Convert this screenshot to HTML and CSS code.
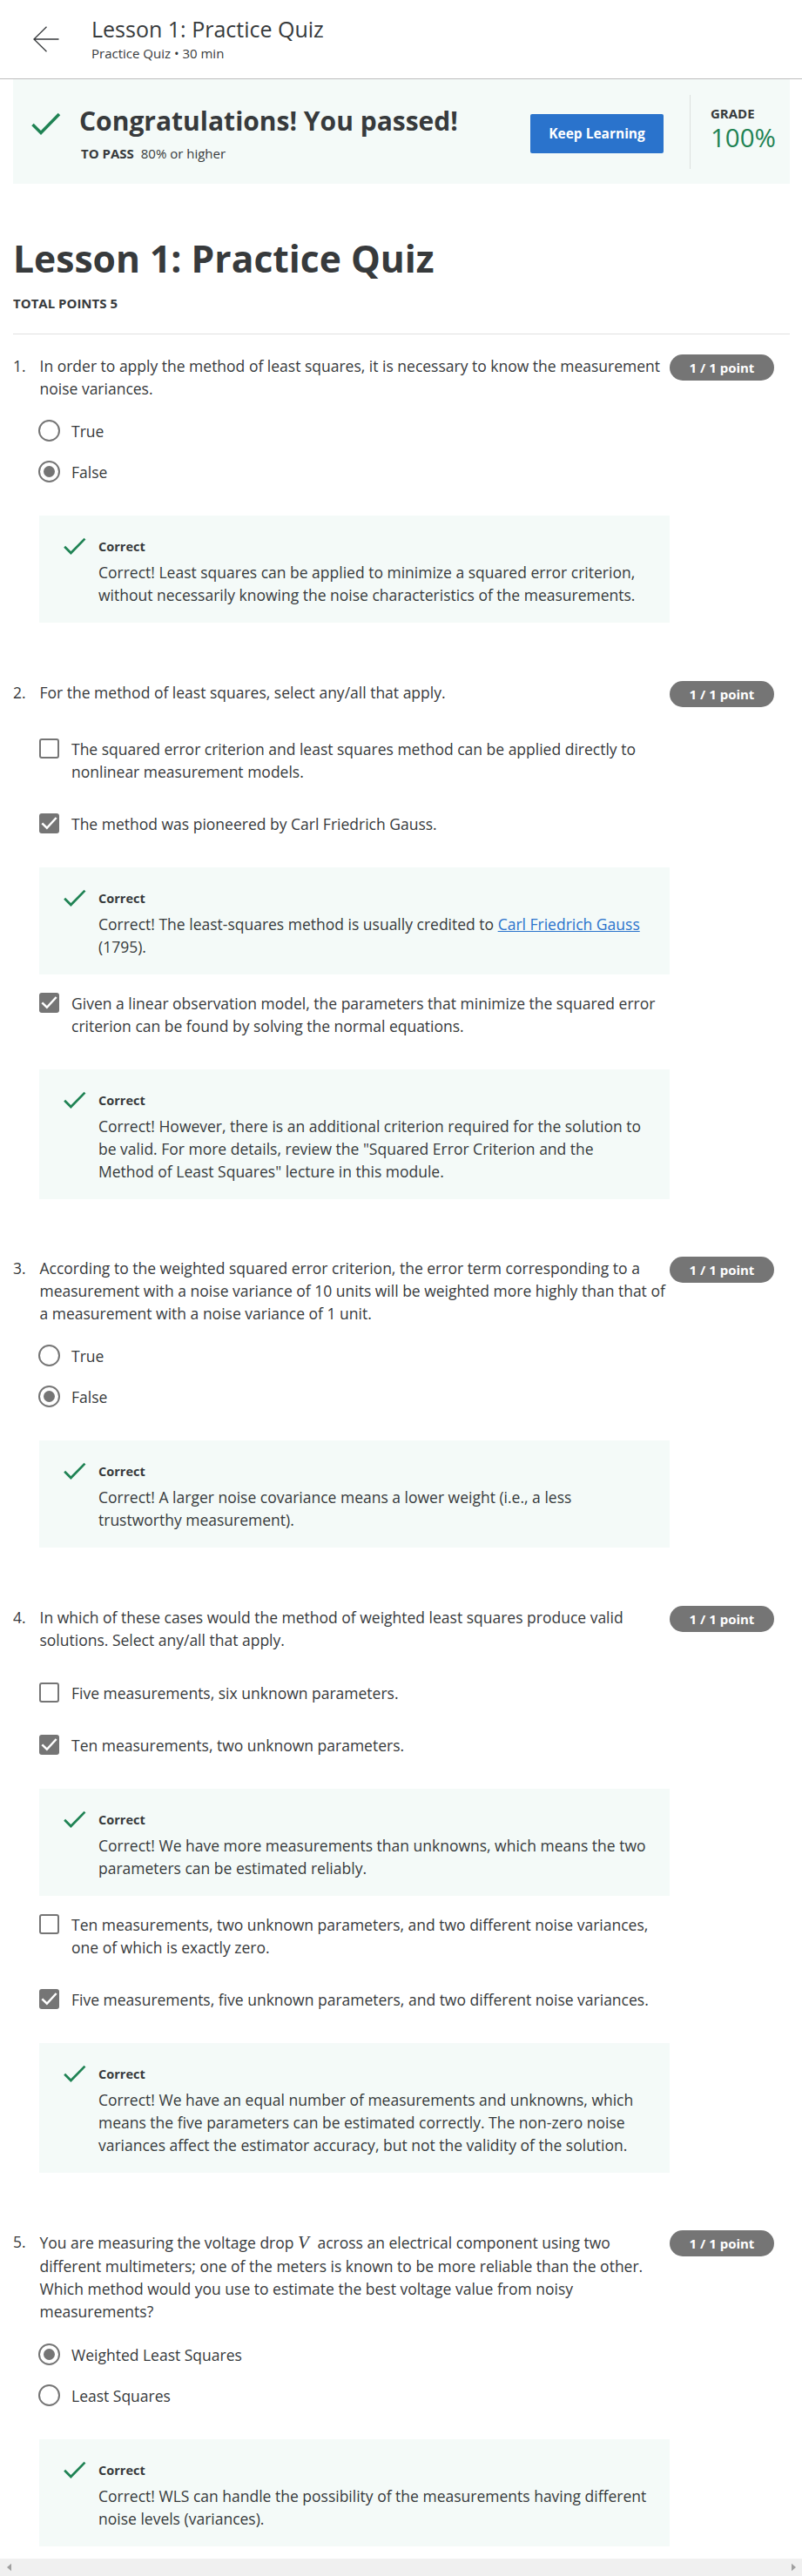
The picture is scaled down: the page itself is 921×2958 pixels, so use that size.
FILE: index.html
```html
<!DOCTYPE html>
<html lang="en">
<head>
<meta charset="utf-8">
<title>Lesson 1: Practice Quiz</title>
<link rel="stylesheet" href="styles.css">
</head>
<body>
<svg class="defs" width="0" height="0">
  <symbol id="check" viewBox="0 0 34 26"><path d="M1.5 14 L11 23.5 L32 2" fill="none" stroke="currentColor" stroke-width="3.5"/></symbol>
  <symbol id="tick" viewBox="0 0 22 22"><path d="M3.2 10.8 L8.5 16 L18.8 4.8" fill="none" stroke="currentColor" stroke-width="2.4"/></symbol>
</svg>
<header class="topbar">
  <svg class="back" viewBox="0 0 30 30"><path d="M15.5 .7 L1 15 L15.5 29.3 M1 15 H29.5" fill="none" stroke="#373a3c" stroke-width="1.3"/></svg>
  <div>
    <div class="topbar-title">Lesson 1: Practice Quiz</div>
    <div class="topbar-sub">Practice Quiz • 30 min</div>
  </div>
</header>
<main class="page">
  <section class="banner">
    <svg class="banner-check"><use href="#check"/></svg>
    <div class="banner-text">
      <h2>Congratulations! You passed!</h2>
      <p><b>TO PASS</b> <span>80% or higher</span></p>
    </div>
    <button class="keep">Keep Learning</button>
    <div class="grade"><b>GRADE</b><span>100%</span></div>
  </section>
  <h1>Lesson 1: Practice Quiz</h1>
  <div class="total">TOTAL POINTS 5</div>

  <section class="question q1">
    <div class="num">1.</div>
    <div class="body">
      <p class="prompt">In order to apply the method of least squares, it is necessary to know the measurement<br>noise variances.</p>
      <div class="radio"><i></i>True</div>
      <div class="radio on"><i></i>False</div>
      <div class="feedback"><svg><use href="#check"/></svg><div><b>Correct</b><p>Correct! Least squares can be applied to minimize a squared error criterion,<br>without necessarily knowing the noise characteristics of the measurements.</p></div></div>
    </div>
    <div class="points">1 / 1 point</div>
  </section>

  <section class="question q2">
    <div class="num">2.</div>
    <div class="body">
      <p class="prompt">For the method of least squares, select any/all that apply.</p>
      <div class="box"><i></i><span>The squared error criterion and least squares method can be applied directly to<br>nonlinear measurement models.</span></div>
      <div class="box on"><i><svg><use href="#tick"/></svg></i><span>The method was pioneered by Carl Friedrich Gauss.</span></div>
      <div class="feedback"><svg><use href="#check"/></svg><div><b>Correct</b><p>Correct! The least-squares method is usually credited to <a href="#">Carl Friedrich Gauss</a><br>(1795).</p></div></div>
      <div class="box on"><i><svg><use href="#tick"/></svg></i><span>Given a linear observation model, the parameters that minimize the squared error<br>criterion can be found by solving the normal equations.</span></div>
      <div class="feedback"><svg><use href="#check"/></svg><div><b>Correct</b><p>Correct! However, there is an additional criterion required for the solution to<br>be valid. For more details, review the "Squared Error Criterion and the<br>Method of Least Squares" lecture in this module.</p></div></div>
    </div>
    <div class="points">1 / 1 point</div>
  </section>

  <section class="question q3">
    <div class="num">3.</div>
    <div class="body">
      <p class="prompt">According to the weighted squared error criterion, the error term corresponding to a<br>measurement with a noise variance of 10 units will be weighted more highly than that of<br>a measurement with a noise variance of 1 unit.</p>
      <div class="radio"><i></i>True</div>
      <div class="radio on"><i></i>False</div>
      <div class="feedback"><svg><use href="#check"/></svg><div><b>Correct</b><p>Correct! A larger noise covariance means a lower weight (i.e., a less<br>trustworthy measurement).</p></div></div>
    </div>
    <div class="points">1 / 1 point</div>
  </section>

  <section class="question q4">
    <div class="num">4.</div>
    <div class="body">
      <p class="prompt">In which of these cases would the method of weighted least squares produce valid<br>solutions. Select any/all that apply.</p>
      <div class="box"><i></i><span>Five measurements, six unknown parameters.</span></div>
      <div class="box on"><i><svg><use href="#tick"/></svg></i><span>Ten measurements, two unknown parameters.</span></div>
      <div class="feedback"><svg><use href="#check"/></svg><div><b>Correct</b><p>Correct! We have more measurements than unknowns, which means the two<br>parameters can be estimated reliably.</p></div></div>
      <div class="box"><i></i><span>Ten measurements, two unknown parameters, and two different noise variances,<br>one of which is exactly zero.</span></div>
      <div class="box on"><i><svg><use href="#tick"/></svg></i><span>Five measurements, five unknown parameters, and two different noise variances.</span></div>
      <div class="feedback"><svg><use href="#check"/></svg><div><b>Correct</b><p>Correct! We have an equal number of measurements and unknowns, which<br>means the five parameters can be estimated correctly. The non-zero noise<br>variances affect the estimator accuracy, but not the validity of the solution.</p></div></div>
    </div>
    <div class="points">1 / 1 point</div>
  </section>

  <section class="question q5">
    <div class="num">5.</div>
    <div class="body">
      <p class="prompt"><span class="math-line">You are measuring the voltage drop <em>V</em> across an electrical component using two</span>different multimeters; one of the meters is known to be more reliable than the other.<br>Which method would you use to estimate the best voltage value from noisy<br>measurements?</p>
      <div class="radio on"><i></i>Weighted Least Squares</div>
      <div class="radio"><i></i>Least Squares</div>
      <div class="feedback"><svg><use href="#check"/></svg><div><b>Correct</b><p>Correct! WLS can handle the possibility of the measurements having different<br>noise levels (variances).</p></div></div>
    </div>
    <div class="points">1 / 1 point</div>
  </section>
</main>
<footer class="scrollbar">
  <svg viewBox="0 0 6 10"><path d="M6 0V10L0 5Z"/></svg>
  <svg viewBox="0 0 6 10"><path d="M0 0V10L6 5Z"/></svg>
</footer>
</body>
</html>
```
FILE: styles.css
```css
* { box-sizing: border-box; margin: 0; padding: 0; }
body {
  width: 921px;
  height: 2958px;
  display: flex;
  flex-direction: column;
  overflow: hidden;
  background: #fff;
  color: #373a3c;
  font: 17.5px/26px "Open Sans", "Noto Sans", sans-serif;
}
.defs { position: absolute; }

.topbar { display: flex; flex: none; height: 91px; border-bottom: 1px solid #bdbdbd; padding: 17px 0 0 38px; }
.back { width: 30px; height: 30px; margin: 13px 37px 0 0; }
.topbar-title { font-size: 25px; line-height: 32px; white-space: nowrap; }
.topbar-sub { font-size: 15px; line-height: 24px; white-space: nowrap; }

.page { flex: 1; padding: 0 14px 0 15px; }
.banner { display: flex; height: 120px; background: #f4faf8; }
.banner-check { flex: none; width: 34px; height: 26px; margin: 38px 21px 0 21px; color: #1f8354; }
.banner-text { width: 518px; white-space: nowrap; }
.banner-text h2 { font-size: 30px; line-height: 40px; margin-top: 28px; }
.banner-text p { font-size: 15px; line-height: 20px; margin: 7px 0 0 2px; }
.banner-text span { margin-left: 4px; }
.keep { flex: none; width: 153px; height: 45px; margin-top: 40px; border: 0; border-radius: 2px; background: #2a73cc; color: #fff; font: bold 15.5px/45px "Open Sans", sans-serif; }
.grade { display: flex; flex-direction: column; height: 85px; margin: 18px 0 0 30px; padding: 11px 0 0 23px; border-left: 1px solid #dcdfde; }
.grade b { font-size: 15px; line-height: 20px; }
.grade span { font-size: 29.5px; line-height: 36px; color: #1f8354; }

h1 { font-size: 42.6px; line-height: 60px; margin-top: 55px; white-space: nowrap; }
.total { height: 58px; border-bottom: 1px solid #e1e1e1; font-size: 15px; line-height: 20px; font-weight: bold; padding-top: 12px; }

.question { display: flex; align-items: flex-start; margin-top: 66px; white-space: nowrap; }
.q1 { margin-top: 23px; }
.q2, .q4 { margin-top: 67px; }
.num { flex: none; width: 30px; }
.body { flex: none; width: 724px; }
.points { flex: none; width: 120px; height: 30px; border-radius: 15px; background: #757575; color: #fff; font-size: 15px; line-height: 31px; font-weight: bold; text-align: center; }
.prompt { margin-bottom: 23px; padding-left: .5px; }
.q2 .prompt { margin-bottom: 39px; }
.q4 .prompt { margin-bottom: 35px; }
.math-line { display: block; height: 28px; padding-top: 1px; }
.math-line em { font: italic 21px/20px "Liberation Serif", serif; margin-right: 5px; }

.radio { display: flex; height: 26px; }
.radio + .radio { margin-top: 21px; }
.radio i { display: flex; align-items: center; justify-content: center; width: 25px; height: 25px; border: 2px solid #757575; border-radius: 50%; margin: 0 13px 0 -1px; }
.radio.on i::after { content: ""; width: 13px; height: 13px; border-radius: 50%; background: #757575; }
.q5 .prompt { margin-bottom: 24px; }

.box { display: flex; }
.box + .box { margin-top: 34px; }
.feedback + .box { margin-top: 20px; }
.box i { flex: none; width: 23px; height: 23px; margin: 1px 14px 0 0; border: 2px solid #757575; border-radius: 3px; }
.box.on i { border: 0; background: #757575; color: #fff; }
.box svg { display: block; width: 23px; height: 23px; }

.feedback { display: flex; margin-top: 37px; padding: 25px 0 19px 28px; background: #f4faf8; }
.feedback > svg { flex: none; width: 26px; height: 20px; margin-right: 14px; color: #1f8354; }
.feedback b { display: block; font-size: 14.5px; line-height: 21px; height: 27px; }
a { color: #2a73cc; text-decoration: underline; }

.scrollbar { flex: none; height: 20px; background: #f0f0f0; display: flex; align-items: center; justify-content: space-between; padding: 0 7px 0 8px; }
.scrollbar svg { width: 5px; height: 10px; fill: #a0a0a0; }
```
